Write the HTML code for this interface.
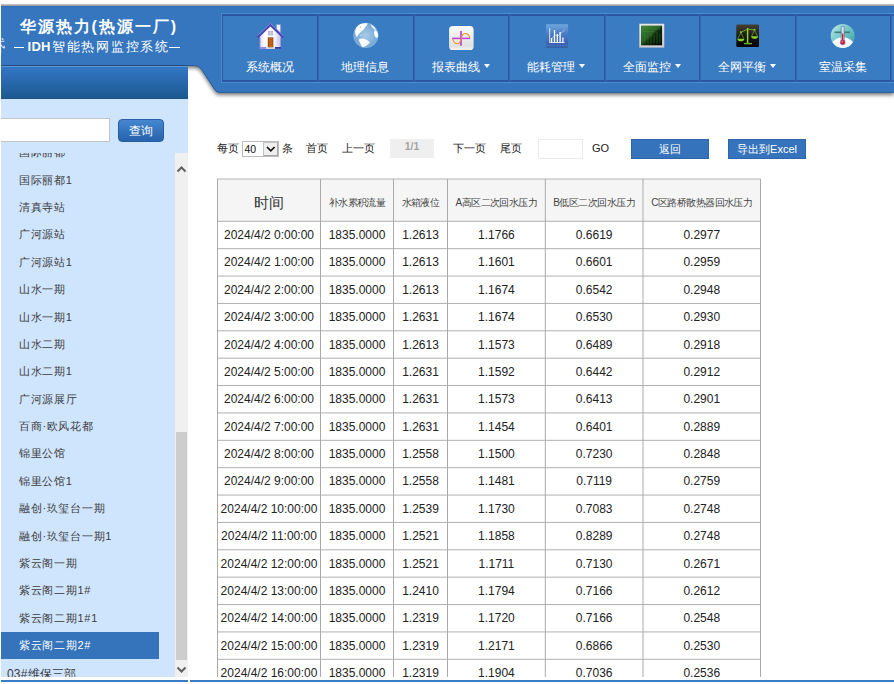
<!DOCTYPE html><html><head><meta charset="utf-8"><style>
*{margin:0;padding:0;box-sizing:border-box}
html,body{width:894px;height:684px;overflow:hidden;background:#fff;font-family:"Liberation Sans",sans-serif}
.a{position:absolute}
.nv{position:absolute;top:14px;height:67px;text-align:center;color:#fff;font-size:12px}
.nv .ic{position:absolute;left:50%;top:8px;margin-left:-14px;width:28px;height:28px}
.nv .tx{position:absolute;left:0;right:0;top:45.6px;line-height:14px;white-space:nowrap}
.tri{display:inline-block;width:0;height:0;border-left:3.5px solid transparent;border-right:3.5px solid transparent;border-top:4px solid #fff;vertical-align:middle;margin-left:4px;position:relative;top:-1px}
.sep{position:absolute;top:14px;height:68px;width:2px;background:#2c55a4;border-right:1px solid #3068b2;width:2px}
.it{position:absolute;left:0;width:158px;height:27.375px;line-height:27px;font-size:11px;letter-spacing:0.7px;color:#3c3c3c;padding-left:18px;white-space:nowrap}
.hl{position:absolute;height:1px;background:#c0c0c0}
.vl{position:absolute;width:1px;background:#b4b4b4}
.c{position:absolute;text-align:center;white-space:nowrap;color:#222;font-size:12px}
.pg{position:absolute;top:141px;font-size:11px;color:#222;line-height:15px;white-space:nowrap}
</style></head><body>

<div class="a" style="left:1px;top:4px;width:893px;height:2px;background:linear-gradient(#c8c8c8,#a8a8a8)"></div>
<svg class="a" style="left:0;top:0" width="894" height="100" viewBox="0 0 894 100">
<defs><filter id="sh" x="-5%" y="-5%" width="110%" height="130%"><feGaussianBlur in="SourceAlpha" stdDeviation="1.9"/><feOffset dy="2.2"/><feComponentTransfer><feFuncA type="linear" slope=".6"/></feComponentTransfer><feMerge><feMergeNode/><feMergeNode in="SourceGraphic"/></feMerge></filter></defs>
<path d="M1 6H894V92.8H219Q216.5 92.8 215 90.4L201.5 69.7Q199 65.8 194.5 65.8H1Z" fill="#3576bf" filter="url(#sh)"/>
<path d="M894 92.3H219Q216.5 92.3 215 89.9L201.5 69.4Q199 65.5 194.5 65.5H188" fill="none" stroke="#2b5a98" stroke-width="1"/>
<rect x="1" y="6" width="893" height="1" fill="#2f6dbb"/>
</svg>
<div class="a" style="left:1px;top:65px;width:187px;height:34px;background:linear-gradient(#284c7c 0,#284c7c 1px,#5a98d4 1px,#5a98d4 2px,#3277c4 2px,#2868ac 50%,#1d5a90 96%,#1a5088 100%)"></div>
<div class="a" style="left:19.5px;top:17px;font-size:16px;font-weight:bold;color:#fff;letter-spacing:2px;white-space:nowrap;line-height:20px">华源热力(热源一厂)</div>
<div class="a" style="left:13.9px;top:47px;width:10.6px;height:1.2px;background:#fff"></div>
<div class="a" style="left:169.4px;top:47px;width:10.6px;height:1.2px;background:#fff"></div>
<div class="a" style="left:27.5px;top:39px;font-size:13px;color:#fff;white-space:nowrap;line-height:16px"><b style="letter-spacing:0.3px">IDH</b><span style="letter-spacing:1.75px;margin-left:1px">智能热网监控系统</span></div>
<div class="a" style="left:-7px;top:37px;font-size:11.5px;color:#f4f8fc;white-space:nowrap;line-height:12px">代</div>
<div class="a" style="left:-3px;top:47px;font-size:7px;color:#a8c8ec;white-space:nowrap;line-height:7px">S</div>
<div class="a" style="left:221px;top:13px;width:673px;height:70px;border-top:1px solid #4a8ed2;border-left:1px solid #4a8ed2;border-bottom:1px solid #4a8ed2"></div>
<div class="a" style="left:222px;top:14px;width:672px;height:68px;background:#3a7cc2;border-top:2px solid #2c55a4;border-left:1.5px solid #2c55a4;border-bottom:2px solid #2c55a4"></div>
<div class="nv" style="left:222px;width:95px"><div class="tx">系统概况</div></div>
<div class="nv" style="left:317px;width:96px"><div class="tx">地理信息</div></div>
<div class="nv" style="left:413px;width:95px"><div class="tx">报表曲线<span class=tri></span></div></div>
<div class="nv" style="left:508px;width:96px"><div class="tx">能耗管理<span class=tri></span></div></div>
<div class="nv" style="left:604px;width:95px"><div class="tx">全面监控<span class=tri></span></div></div>
<div class="nv" style="left:699px;width:96px"><div class="tx">全网平衡<span class=tri></span></div></div>
<div class="nv" style="left:795px;width:95px"><div class="tx">室温采集</div></div>
<div class="sep" style="left:317px"></div>
<div class="sep" style="left:413px"></div>
<div class="sep" style="left:508px"></div>
<div class="sep" style="left:604px"></div>
<div class="sep" style="left:699px"></div>
<div class="sep" style="left:795px"></div>
<div class="sep" style="left:890px"></div>
<svg class="a" style="left:0;top:0" width="894" height="60" viewBox="0 0 894 60">
<defs>
<linearGradient id="hw" x1="0" y1="0" x2="1" y2="0"><stop offset="0" stop-color="#dcdcf8"/><stop offset=".25" stop-color="#ffffff"/><stop offset=".7" stop-color="#f4f4ff"/><stop offset="1" stop-color="#c0c0ec"/></linearGradient>
<radialGradient id="gg" cx=".5" cy=".5" r=".55"><stop offset="0" stop-color="#a8cae8"/><stop offset=".8" stop-color="#78aad8"/><stop offset="1" stop-color="#5a90c4"/></radialGradient>
<linearGradient id="cg" x1="0" y1="0" x2="0" y2="1"><stop offset="0" stop-color="#fbfbfb"/><stop offset=".85" stop-color="#e2e2e2"/><stop offset="1" stop-color="#f6f6f6"/></linearGradient>
<linearGradient id="bg" x1="0" y1="0" x2="0" y2="1"><stop offset="0" stop-color="#70a8dc"/><stop offset=".4" stop-color="#4a7ec6"/><stop offset="1" stop-color="#3a5aaa"/></linearGradient>
<linearGradient id="mg" x1="0" y1="0" x2="1" y2="1"><stop offset="0" stop-color="#3e8436"/><stop offset=".45" stop-color="#2a5e24"/><stop offset=".55" stop-color="#0e2a0c"/><stop offset="1" stop-color="#020802"/></linearGradient>
<linearGradient id="mf" x1="0" y1="0" x2="0" y2="1"><stop offset="0" stop-color="#ecebf0"/><stop offset="1" stop-color="#cfccd4"/></linearGradient>
<linearGradient id="sg" x1="0" y1="0" x2="0" y2="1"><stop offset="0" stop-color="#463e34"/><stop offset=".6" stop-color="#151310"/><stop offset="1" stop-color="#000"/></linearGradient>
<linearGradient id="tg" x1="0" y1="0" x2="1" y2="1"><stop offset="0" stop-color="#c4ecec"/><stop offset=".5" stop-color="#6cc4c4"/><stop offset="1" stop-color="#3a9aa0"/></linearGradient>
</defs>
<!-- house -->
<rect x="276.6" y="24.6" width="3.8" height="8" fill="#f2f2ff" stroke="#9a9ad8" stroke-width=".4"/>
<path d="M259.7 48.8V36L270.4 25.6L281 36V48.8Z" fill="url(#hw)" stroke="#7070c8" stroke-width=".5"/>
<path d="M256.4 36.6L270.4 22.9L284.4 36.6L282.4 38L270.4 26.4L258.4 38Z" fill="#4646b0"/>
<path d="M257.4 35.8L270.4 23.4L283.4 35.8" fill="none" stroke="#9c9cf0" stroke-width=".8"/>
<path d="M259.9 38V48.6M281 38V48.6" stroke="#6a6ac4" stroke-width=".6"/>
<rect x="268" y="30.9" width="5" height="4.4" fill="#b4b4c4"/><path d="M270.5 31V35.3M268 33H273" stroke="#e8e8f0" stroke-width=".5"/>
<rect x="267.8" y="37.4" width="5.5" height="10.2" fill="#7a3a10"/><rect x="268.5" y="38" width="4.1" height="9.4" fill="#c8641c"/>
<path d="M269.2 39.5H272M269.2 42H272M269.2 44.5H272" stroke="#a04e14" stroke-width=".5"/>
<rect x="259.7" y="47" width="6.5" height="1.8" fill="#8c8cec"/><rect x="275" y="47" width="6" height="1.8" fill="#3a3aa4"/>
<rect x="266.2" y="47.4" width="8.8" height="1.4" fill="#d4dce6"/>
<!-- globe -->
<circle cx="365.9" cy="35.4" r="12.5" fill="url(#gg)"/>
<circle cx="365.9" cy="35.4" r="12.2" fill="none" stroke="#9cc8ec" stroke-width=".6" opacity=".8"/>
<path d="M355.2 30.4C356 27.5 358 25 360.5 24C363 23.2 365.5 23.1 367.7 23.6C367.2 25.2 366 26.5 365 27.6C364.2 28.8 363.8 29.6 363 30.2C362 31 361.3 31.5 360.5 32.2C359.8 32.8 359.5 33.5 358.6 34.3C358 35 357.8 36 356.8 37.2C356 36 355.5 34.8 355.3 33.2C355.1 32.2 355.1 31.2 355.2 30.4Z" fill="#fff"/>
<path d="M359.6 26.6C360.6 26.2 361.5 26.5 361.3 27.4C360.8 28 359.9 27.9 359.6 26.6Z" fill="#8ab6e0"/>
<path d="M359.8 35.2L361.2 35.8M362.2 34.6L363 35.2" stroke="#e8f2fc" stroke-width=".7"/>
<path d="M370.3 24.2C372.2 24.8 374.5 26.8 375.8 29.4C375.6 30.3 374.8 30.1 374 29.2C372.8 27.8 371.2 26.3 370.3 24.2Z" fill="#f4f8fc"/>
<path d="M375 30C376.8 30.6 378.1 33 378.1 35.5C378 37 377.2 38 376 37.8C374.8 36.8 374.1 34.8 374.1 32.8C374.1 31.6 374.4 30.6 375 30Z" fill="#fff"/>
<path d="M358.8 39.6C360.2 38.6 362.2 38.3 364 38.8C366 39.4 368 40.6 369.9 42.3C369.4 43.5 368.2 44.4 367 45.2C365.5 46 364 46.8 362.6 47.3C361.6 46.6 361 45.2 360.4 43.8C359.8 42.4 359 41 358.8 39.6Z" fill="#fbfbfb"/>
<!-- chart -->
<rect x="449.1" y="26.1" width="24.5" height="23.9" rx="3.6" fill="url(#cg)"/>
<path d="M452.1 38.4H470.1" stroke="#c03ee0" stroke-width="1.5"/>
<path d="M461 30.9V45.8" stroke="#c03ee0" stroke-width="1.7"/>
<path d="M452.5 38.6C453.5 42 455.5 43.8 457.5 43.8C459.8 43.8 460.5 41 461.2 38.4C462 35.5 463 33.5 465.2 33.5C467.5 33.5 469.5 35.5 470 38.2" fill="none" stroke="#e8982c" stroke-width="1.1"/>
<!-- bars -->
<rect x="545.9" y="24.3" width="22.2" height="22.6" rx=".8" fill="url(#bg)"/>
<rect x="545.9" y="45.4" width="22.2" height="1.2" fill="#4a80d4"/>
<rect x="546.3" y="46.6" width="21.4" height=".9" fill="#26406e" opacity=".7"/>
<path d="M549.7 28.2V42.5H564.6" fill="none" stroke="#f0f4ff" stroke-width=".9"/>
<path d="M551.6 38V42M554.5 30V42M557.3 34V42M560.1 32V42M562.9 37.5V42" stroke="#fff" stroke-width="1.3"/>
<path d="M550.5 40.5L555 35L558 36L564.8 29.8" fill="none" stroke="#dde8f8" stroke-width=".6"/>
<!-- monitor -->
<rect x="639.3" y="23.9" width="24.8" height="23.6" fill="url(#mf)" stroke="#b4b0b8" stroke-width=".4"/>
<rect x="641" y="25.6" width="21.1" height="19.7" fill="url(#mg)"/>
<path d="M642 27H661M642.5 29H660M643 31.5H654M645 34V44M648 36V44M651 33V44M654 35V43M657 32V44M660 34V43" stroke="#3c9a34" stroke-width=".7" opacity=".55"/>
<!-- scale -->
<rect x="736.3" y="24.6" width="22.7" height="22.4" rx="1.2" fill="url(#sg)"/>
<path d="M747.6 28V43" stroke="#86d432" stroke-width="1.5"/>
<path d="M744 43.6H752" stroke="#6ab028" stroke-width="1.4"/>
<path d="M740.8 32.3L747.6 29.2L754.5 29.8" stroke="#78c030" stroke-width=".8" fill="none"/>
<circle cx="740.8" cy="32.3" r="1" fill="#86d432"/><circle cx="754.5" cy="29.8" r="1" fill="#86d432"/>
<path d="M737.2 38.8H744.5C744 40.8 742.8 41.3 740.9 41.3C739 41.3 737.8 40.8 737.2 38.8Z" fill="#86d432"/>
<path d="M751 36.3H758.2C757.7 38.3 756.5 38.8 754.6 38.8C752.7 38.8 751.5 38.3 751 36.3Z" fill="#86d432"/>
<path d="M740.8 32.5L737.8 38.8M740.8 32.5L743.9 38.8M754.5 30L751.6 36.3M754.5 30L757.6 36.3" stroke="#6aa828" stroke-width=".7"/>
<!-- thermo -->
<circle cx="842.7" cy="35.9" r="12" fill="url(#tg)"/>
<path d="M832.5 42C835 38.8 838.5 37.2 842.7 37.2C847 37.2 850.5 38.8 853 42C851 45.8 847.2 48 842.7 48C838.2 48 834.5 45.8 832.5 42Z" fill="#fafafc"/>
<rect x="834.5" y="31.5" width="15.5" height="1.6" fill="#3e6a6a" opacity=".85"/>
<rect x="841.2" y="26.2" width="3" height="16" rx="1.5" fill="#c8ecec" stroke="#505a90" stroke-width=".6"/>
<rect x="842" y="33.5" width="1.4" height="8" fill="#e01838"/>
<circle cx="842.7" cy="42.4" r="2.4" fill="#e01838" stroke="#5a6094" stroke-width=".6"/>
<circle cx="842.1" cy="41.8" r=".7" fill="#ff9aaa"/>
</svg>
<div class="a" style="left:1px;top:99px;width:187px;height:578px;background:#cfe4fd"></div>
<div class="a" style="left:1px;top:118px;width:109px;height:24px;background:#fff;border:1px solid #c4c4c4;border-left:none"></div>
<div class="a" style="left:117.6px;top:119px;width:46.4px;height:23px;border-radius:4px;background:linear-gradient(#4488d0,#2762ac);border:1px solid #2a5ea4;color:#fff;font-size:12px;line-height:23.5px;text-align:center">查询</div>
<div class="a" style="left:1px;top:153px;width:187px;height:524px;overflow:hidden">
<div class="it" style="top:-13.75px">国际丽都</div>
<div class="it" style="top:13.625px">国际丽都1</div>
<div class="it" style="top:41.0px">清真寺站</div>
<div class="it" style="top:68.375px">广河源站</div>
<div class="it" style="top:95.75px">广河源站1</div>
<div class="it" style="top:123.125px">山水一期</div>
<div class="it" style="top:150.5px">山水一期1</div>
<div class="it" style="top:177.875px">山水二期</div>
<div class="it" style="top:205.25px">山水二期1</div>
<div class="it" style="top:232.625px">广河源展厅</div>
<div class="it" style="top:260.0px">百商·欧风花都</div>
<div class="it" style="top:287.375px">锦里公馆</div>
<div class="it" style="top:314.75px">锦里公馆1</div>
<div class="it" style="top:342.125px">融创·玖玺台一期</div>
<div class="it" style="top:369.5px">融创·玖玺台一期1</div>
<div class="it" style="top:396.875px">紫云阁一期</div>
<div class="it" style="top:424.25px">紫云阁二期1#</div>
<div class="it" style="top:451.625px">紫云阁二期1#1</div>
<div class="it" style="top:479.0px;background:#3573bb;color:#fff;height:27px">紫云阁二期2#</div>
<div class="it" style="top:508.2px;padding-left:6px;font-size:12px;letter-spacing:0.2px">03#维保三部</div>
</div>
<div class="a" style="left:175px;top:153px;width:13px;height:524px;background:#f0f0f0"></div>
<div class="a" style="left:176px;top:432px;width:11px;height:228px;background:#cdcdcd"></div>
<svg class="a" style="left:175px;top:163px" width="13" height="12"><path d="M2.5 8.5L6.5 4.5L10.5 8.5" fill="none" stroke="#606060" stroke-width="2"/></svg>
<svg class="a" style="left:175px;top:664px" width="13" height="12"><path d="M2.5 3.5L6.5 7.5L10.5 3.5" fill="none" stroke="#606060" stroke-width="2"/></svg>
<div class="pg" style="left:217px">每页</div>
<div class="a" style="left:242px;top:141px;width:37px;height:16px;border:1px solid #bcbcbc;background:#fff"></div>
<div class="a" style="left:244.5px;top:142px;font-size:10.5px;line-height:15px;color:#111">40</div>
<div class="a" style="left:263px;top:142px;width:15px;height:14px;background:#efefef;border:1px solid #a8a8a8;border-top-color:#c4c4c4;border-left-color:#c4c4c4"></div>
<svg class="a" style="left:263px;top:142px" width="15" height="14"><path d="M4 5L7.8 8.8L11.6 5" fill="none" stroke="#111" stroke-width="1.7"/></svg>
<div class="pg" style="left:282px">条</div>
<div class="pg" style="left:306px">首页</div>
<div class="pg" style="left:342px">上一页</div>
<div class="a" style="left:390px;top:139px;width:44px;height:19px;background:#efefef;color:#a4a4a4;font-size:10.5px;font-weight:bold;line-height:14px;text-align:center">1/1</div>
<div class="pg" style="left:453px">下一页</div>
<div class="pg" style="left:500px">尾页</div>
<div class="a" style="left:538px;top:138.5px;width:45px;height:20px;border:1px solid #ebebeb;background:#fff"></div>
<div class="pg" style="left:592px">GO</div>
<div class="a" style="left:631px;top:139px;width:78px;height:19.6px;background:#3573bd;border:1px solid #2e64a8;color:#fff;font-size:11px;line-height:18px;text-align:center">返回</div>
<div class="a" style="left:728px;top:139px;width:78px;height:19.6px;background:#3573bd;border:1px solid #2e64a8;color:#fff;font-size:11px;line-height:18px;text-align:center">导出到Excel</div>
<div class="a" style="left:0;top:0;width:894px;height:677px;overflow:hidden">
<div class="a" style="left:217.5px;top:179px;width:543.0px;height:42.30000000000001px;background:#f5f5f5"></div>
<svg class="a" style="left:0;top:0" width="894" height="684" viewBox="0 0 894 684" shape-rendering="geometricPrecision"><path d="M217.5 179H760.5" stroke="#b4b4b4" stroke-width="1"/><path d="M217.5 221.300H760.5" stroke="#b0b0b0" stroke-width="1"/><path d="M217.5 248.675H760.5" stroke="#b0b0b0" stroke-width="1"/><path d="M217.5 276.050H760.5" stroke="#b0b0b0" stroke-width="1"/><path d="M217.5 303.425H760.5" stroke="#b0b0b0" stroke-width="1"/><path d="M217.5 330.800H760.5" stroke="#b0b0b0" stroke-width="1"/><path d="M217.5 358.175H760.5" stroke="#b0b0b0" stroke-width="1"/><path d="M217.5 385.550H760.5" stroke="#b0b0b0" stroke-width="1"/><path d="M217.5 412.925H760.5" stroke="#b0b0b0" stroke-width="1"/><path d="M217.5 440.300H760.5" stroke="#b0b0b0" stroke-width="1"/><path d="M217.5 467.675H760.5" stroke="#b0b0b0" stroke-width="1"/><path d="M217.5 495.050H760.5" stroke="#b0b0b0" stroke-width="1"/><path d="M217.5 522.425H760.5" stroke="#b0b0b0" stroke-width="1"/><path d="M217.5 549.800H760.5" stroke="#b0b0b0" stroke-width="1"/><path d="M217.5 577.175H760.5" stroke="#b0b0b0" stroke-width="1"/><path d="M217.5 604.550H760.5" stroke="#b0b0b0" stroke-width="1"/><path d="M217.5 631.925H760.5" stroke="#b0b0b0" stroke-width="1"/><path d="M217.5 659.300H760.5" stroke="#b0b0b0" stroke-width="1"/><path d="M217.5 686.675H760.5" stroke="#b0b0b0" stroke-width="1"/><path d="M217.5 179V700" stroke="#aaaaaa" stroke-width="1"/><path d="M320.5 179V700" stroke="#aaaaaa" stroke-width="1"/><path d="M393.5 179V700" stroke="#aaaaaa" stroke-width="1"/><path d="M447.5 179V700" stroke="#aaaaaa" stroke-width="1"/><path d="M545.3 179V700" stroke="#aaaaaa" stroke-width="1"/><path d="M643 179V700" stroke="#aaaaaa" stroke-width="1"/><path d="M760.5 179V700" stroke="#aaaaaa" stroke-width="1"/></svg>
<div class="c" style="left:217.5px;width:103.0px;top:181.5px;height:42.30000000000001px;line-height:42.30000000000001px;font-size:14.5px;color:#333;letter-spacing:0px">时间</div>
<div class="c" style="left:320.5px;width:73.0px;top:181.5px;height:42.30000000000001px;line-height:42.30000000000001px;font-size:10px;color:#444;letter-spacing:-0.55px">补水累积流量</div>
<div class="c" style="left:393.5px;width:54.0px;top:181.5px;height:42.30000000000001px;line-height:42.30000000000001px;font-size:10px;color:#444;letter-spacing:-0.55px">水箱液位</div>
<div class="c" style="left:447.5px;width:97.79999999999995px;top:181.5px;height:42.30000000000001px;line-height:42.30000000000001px;font-size:10px;color:#444;letter-spacing:-0.55px">A高区二次回水压力</div>
<div class="c" style="left:545.3px;width:97.70000000000005px;top:181.5px;height:42.30000000000001px;line-height:42.30000000000001px;font-size:10px;color:#444;letter-spacing:-0.55px">B低区二次回水压力</div>
<div class="c" style="left:643px;width:117.5px;top:181.5px;height:42.30000000000001px;line-height:42.30000000000001px;font-size:10px;color:#444;letter-spacing:-0.55px">C区路桥散热器回水压力</div>
<div class="c" style="left:217.5px;width:103.0px;top:222.100px;height:27.375px;line-height:27.375px">2024/4/2 0:00:00</div>
<div class="c" style="left:320.5px;width:73.0px;top:222.100px;height:27.375px;line-height:27.375px">1835.0000</div>
<div class="c" style="left:393.5px;width:54.0px;top:222.100px;height:27.375px;line-height:27.375px">1.2613</div>
<div class="c" style="left:447.5px;width:97.79999999999995px;top:222.100px;height:27.375px;line-height:27.375px">1.1766</div>
<div class="c" style="left:545.3px;width:97.70000000000005px;top:222.100px;height:27.375px;line-height:27.375px">0.6619</div>
<div class="c" style="left:643px;width:117.5px;top:222.100px;height:27.375px;line-height:27.375px">0.2977</div>
<div class="c" style="left:217.5px;width:103.0px;top:249.475px;height:27.375px;line-height:27.375px">2024/4/2 1:00:00</div>
<div class="c" style="left:320.5px;width:73.0px;top:249.475px;height:27.375px;line-height:27.375px">1835.0000</div>
<div class="c" style="left:393.5px;width:54.0px;top:249.475px;height:27.375px;line-height:27.375px">1.2613</div>
<div class="c" style="left:447.5px;width:97.79999999999995px;top:249.475px;height:27.375px;line-height:27.375px">1.1601</div>
<div class="c" style="left:545.3px;width:97.70000000000005px;top:249.475px;height:27.375px;line-height:27.375px">0.6601</div>
<div class="c" style="left:643px;width:117.5px;top:249.475px;height:27.375px;line-height:27.375px">0.2959</div>
<div class="c" style="left:217.5px;width:103.0px;top:276.850px;height:27.375px;line-height:27.375px">2024/4/2 2:00:00</div>
<div class="c" style="left:320.5px;width:73.0px;top:276.850px;height:27.375px;line-height:27.375px">1835.0000</div>
<div class="c" style="left:393.5px;width:54.0px;top:276.850px;height:27.375px;line-height:27.375px">1.2613</div>
<div class="c" style="left:447.5px;width:97.79999999999995px;top:276.850px;height:27.375px;line-height:27.375px">1.1674</div>
<div class="c" style="left:545.3px;width:97.70000000000005px;top:276.850px;height:27.375px;line-height:27.375px">0.6542</div>
<div class="c" style="left:643px;width:117.5px;top:276.850px;height:27.375px;line-height:27.375px">0.2948</div>
<div class="c" style="left:217.5px;width:103.0px;top:304.225px;height:27.375px;line-height:27.375px">2024/4/2 3:00:00</div>
<div class="c" style="left:320.5px;width:73.0px;top:304.225px;height:27.375px;line-height:27.375px">1835.0000</div>
<div class="c" style="left:393.5px;width:54.0px;top:304.225px;height:27.375px;line-height:27.375px">1.2631</div>
<div class="c" style="left:447.5px;width:97.79999999999995px;top:304.225px;height:27.375px;line-height:27.375px">1.1674</div>
<div class="c" style="left:545.3px;width:97.70000000000005px;top:304.225px;height:27.375px;line-height:27.375px">0.6530</div>
<div class="c" style="left:643px;width:117.5px;top:304.225px;height:27.375px;line-height:27.375px">0.2930</div>
<div class="c" style="left:217.5px;width:103.0px;top:331.600px;height:27.375px;line-height:27.375px">2024/4/2 4:00:00</div>
<div class="c" style="left:320.5px;width:73.0px;top:331.600px;height:27.375px;line-height:27.375px">1835.0000</div>
<div class="c" style="left:393.5px;width:54.0px;top:331.600px;height:27.375px;line-height:27.375px">1.2613</div>
<div class="c" style="left:447.5px;width:97.79999999999995px;top:331.600px;height:27.375px;line-height:27.375px">1.1573</div>
<div class="c" style="left:545.3px;width:97.70000000000005px;top:331.600px;height:27.375px;line-height:27.375px">0.6489</div>
<div class="c" style="left:643px;width:117.5px;top:331.600px;height:27.375px;line-height:27.375px">0.2918</div>
<div class="c" style="left:217.5px;width:103.0px;top:358.975px;height:27.375px;line-height:27.375px">2024/4/2 5:00:00</div>
<div class="c" style="left:320.5px;width:73.0px;top:358.975px;height:27.375px;line-height:27.375px">1835.0000</div>
<div class="c" style="left:393.5px;width:54.0px;top:358.975px;height:27.375px;line-height:27.375px">1.2631</div>
<div class="c" style="left:447.5px;width:97.79999999999995px;top:358.975px;height:27.375px;line-height:27.375px">1.1592</div>
<div class="c" style="left:545.3px;width:97.70000000000005px;top:358.975px;height:27.375px;line-height:27.375px">0.6442</div>
<div class="c" style="left:643px;width:117.5px;top:358.975px;height:27.375px;line-height:27.375px">0.2912</div>
<div class="c" style="left:217.5px;width:103.0px;top:386.350px;height:27.375px;line-height:27.375px">2024/4/2 6:00:00</div>
<div class="c" style="left:320.5px;width:73.0px;top:386.350px;height:27.375px;line-height:27.375px">1835.0000</div>
<div class="c" style="left:393.5px;width:54.0px;top:386.350px;height:27.375px;line-height:27.375px">1.2631</div>
<div class="c" style="left:447.5px;width:97.79999999999995px;top:386.350px;height:27.375px;line-height:27.375px">1.1573</div>
<div class="c" style="left:545.3px;width:97.70000000000005px;top:386.350px;height:27.375px;line-height:27.375px">0.6413</div>
<div class="c" style="left:643px;width:117.5px;top:386.350px;height:27.375px;line-height:27.375px">0.2901</div>
<div class="c" style="left:217.5px;width:103.0px;top:413.725px;height:27.375px;line-height:27.375px">2024/4/2 7:00:00</div>
<div class="c" style="left:320.5px;width:73.0px;top:413.725px;height:27.375px;line-height:27.375px">1835.0000</div>
<div class="c" style="left:393.5px;width:54.0px;top:413.725px;height:27.375px;line-height:27.375px">1.2631</div>
<div class="c" style="left:447.5px;width:97.79999999999995px;top:413.725px;height:27.375px;line-height:27.375px">1.1454</div>
<div class="c" style="left:545.3px;width:97.70000000000005px;top:413.725px;height:27.375px;line-height:27.375px">0.6401</div>
<div class="c" style="left:643px;width:117.5px;top:413.725px;height:27.375px;line-height:27.375px">0.2889</div>
<div class="c" style="left:217.5px;width:103.0px;top:441.100px;height:27.375px;line-height:27.375px">2024/4/2 8:00:00</div>
<div class="c" style="left:320.5px;width:73.0px;top:441.100px;height:27.375px;line-height:27.375px">1835.0000</div>
<div class="c" style="left:393.5px;width:54.0px;top:441.100px;height:27.375px;line-height:27.375px">1.2558</div>
<div class="c" style="left:447.5px;width:97.79999999999995px;top:441.100px;height:27.375px;line-height:27.375px">1.1500</div>
<div class="c" style="left:545.3px;width:97.70000000000005px;top:441.100px;height:27.375px;line-height:27.375px">0.7230</div>
<div class="c" style="left:643px;width:117.5px;top:441.100px;height:27.375px;line-height:27.375px">0.2848</div>
<div class="c" style="left:217.5px;width:103.0px;top:468.475px;height:27.375px;line-height:27.375px">2024/4/2 9:00:00</div>
<div class="c" style="left:320.5px;width:73.0px;top:468.475px;height:27.375px;line-height:27.375px">1835.0000</div>
<div class="c" style="left:393.5px;width:54.0px;top:468.475px;height:27.375px;line-height:27.375px">1.2558</div>
<div class="c" style="left:447.5px;width:97.79999999999995px;top:468.475px;height:27.375px;line-height:27.375px">1.1481</div>
<div class="c" style="left:545.3px;width:97.70000000000005px;top:468.475px;height:27.375px;line-height:27.375px">0.7119</div>
<div class="c" style="left:643px;width:117.5px;top:468.475px;height:27.375px;line-height:27.375px">0.2759</div>
<div class="c" style="left:217.5px;width:103.0px;top:495.850px;height:27.375px;line-height:27.375px">2024/4/2 10:00:00</div>
<div class="c" style="left:320.5px;width:73.0px;top:495.850px;height:27.375px;line-height:27.375px">1835.0000</div>
<div class="c" style="left:393.5px;width:54.0px;top:495.850px;height:27.375px;line-height:27.375px">1.2539</div>
<div class="c" style="left:447.5px;width:97.79999999999995px;top:495.850px;height:27.375px;line-height:27.375px">1.1730</div>
<div class="c" style="left:545.3px;width:97.70000000000005px;top:495.850px;height:27.375px;line-height:27.375px">0.7083</div>
<div class="c" style="left:643px;width:117.5px;top:495.850px;height:27.375px;line-height:27.375px">0.2748</div>
<div class="c" style="left:217.5px;width:103.0px;top:523.225px;height:27.375px;line-height:27.375px">2024/4/2 11:00:00</div>
<div class="c" style="left:320.5px;width:73.0px;top:523.225px;height:27.375px;line-height:27.375px">1835.0000</div>
<div class="c" style="left:393.5px;width:54.0px;top:523.225px;height:27.375px;line-height:27.375px">1.2521</div>
<div class="c" style="left:447.5px;width:97.79999999999995px;top:523.225px;height:27.375px;line-height:27.375px">1.1858</div>
<div class="c" style="left:545.3px;width:97.70000000000005px;top:523.225px;height:27.375px;line-height:27.375px">0.8289</div>
<div class="c" style="left:643px;width:117.5px;top:523.225px;height:27.375px;line-height:27.375px">0.2748</div>
<div class="c" style="left:217.5px;width:103.0px;top:550.600px;height:27.375px;line-height:27.375px">2024/4/2 12:00:00</div>
<div class="c" style="left:320.5px;width:73.0px;top:550.600px;height:27.375px;line-height:27.375px">1835.0000</div>
<div class="c" style="left:393.5px;width:54.0px;top:550.600px;height:27.375px;line-height:27.375px">1.2521</div>
<div class="c" style="left:447.5px;width:97.79999999999995px;top:550.600px;height:27.375px;line-height:27.375px">1.1711</div>
<div class="c" style="left:545.3px;width:97.70000000000005px;top:550.600px;height:27.375px;line-height:27.375px">0.7130</div>
<div class="c" style="left:643px;width:117.5px;top:550.600px;height:27.375px;line-height:27.375px">0.2671</div>
<div class="c" style="left:217.5px;width:103.0px;top:577.975px;height:27.375px;line-height:27.375px">2024/4/2 13:00:00</div>
<div class="c" style="left:320.5px;width:73.0px;top:577.975px;height:27.375px;line-height:27.375px">1835.0000</div>
<div class="c" style="left:393.5px;width:54.0px;top:577.975px;height:27.375px;line-height:27.375px">1.2410</div>
<div class="c" style="left:447.5px;width:97.79999999999995px;top:577.975px;height:27.375px;line-height:27.375px">1.1794</div>
<div class="c" style="left:545.3px;width:97.70000000000005px;top:577.975px;height:27.375px;line-height:27.375px">0.7166</div>
<div class="c" style="left:643px;width:117.5px;top:577.975px;height:27.375px;line-height:27.375px">0.2612</div>
<div class="c" style="left:217.5px;width:103.0px;top:605.350px;height:27.375px;line-height:27.375px">2024/4/2 14:00:00</div>
<div class="c" style="left:320.5px;width:73.0px;top:605.350px;height:27.375px;line-height:27.375px">1835.0000</div>
<div class="c" style="left:393.5px;width:54.0px;top:605.350px;height:27.375px;line-height:27.375px">1.2319</div>
<div class="c" style="left:447.5px;width:97.79999999999995px;top:605.350px;height:27.375px;line-height:27.375px">1.1720</div>
<div class="c" style="left:545.3px;width:97.70000000000005px;top:605.350px;height:27.375px;line-height:27.375px">0.7166</div>
<div class="c" style="left:643px;width:117.5px;top:605.350px;height:27.375px;line-height:27.375px">0.2548</div>
<div class="c" style="left:217.5px;width:103.0px;top:632.725px;height:27.375px;line-height:27.375px">2024/4/2 15:00:00</div>
<div class="c" style="left:320.5px;width:73.0px;top:632.725px;height:27.375px;line-height:27.375px">1835.0000</div>
<div class="c" style="left:393.5px;width:54.0px;top:632.725px;height:27.375px;line-height:27.375px">1.2319</div>
<div class="c" style="left:447.5px;width:97.79999999999995px;top:632.725px;height:27.375px;line-height:27.375px">1.2171</div>
<div class="c" style="left:545.3px;width:97.70000000000005px;top:632.725px;height:27.375px;line-height:27.375px">0.6866</div>
<div class="c" style="left:643px;width:117.5px;top:632.725px;height:27.375px;line-height:27.375px">0.2530</div>
<div class="c" style="left:217.5px;width:103.0px;top:660.100px;height:27.375px;line-height:27.375px">2024/4/2 16:00:00</div>
<div class="c" style="left:320.5px;width:73.0px;top:660.100px;height:27.375px;line-height:27.375px">1835.0000</div>
<div class="c" style="left:393.5px;width:54.0px;top:660.100px;height:27.375px;line-height:27.375px">1.2319</div>
<div class="c" style="left:447.5px;width:97.79999999999995px;top:660.100px;height:27.375px;line-height:27.375px">1.1904</div>
<div class="c" style="left:545.3px;width:97.70000000000005px;top:660.100px;height:27.375px;line-height:27.375px">0.7036</div>
<div class="c" style="left:643px;width:117.5px;top:660.100px;height:27.375px;line-height:27.375px">0.2536</div>
</div>
<div class="a" style="left:1px;top:680px;width:187px;height:2px;background:#3a7cc6"></div>
<div class="a" style="left:190px;top:680px;width:704px;height:2px;background:#3a7cc6"></div>
<div class="a" style="left:0;top:0;width:1px;height:684px;background:#fff"></div>
</body></html>
